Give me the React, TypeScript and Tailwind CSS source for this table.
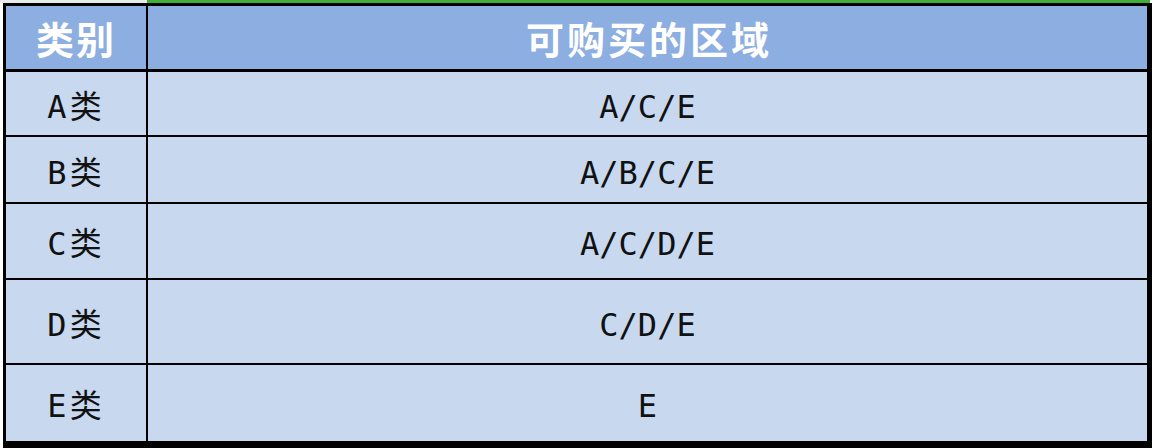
const rows = [
  { cat: "A类", zones: "A/C/E", h: "h-[65px]" },
  { cat: "B类", zones: "A/B/C/E", h: "h-[67px]" },
  { cat: "C类", zones: "A/C/D/E", h: "h-[76px]" },
  { cat: "D类", zones: "C/D/E", h: "h-[85px]" },
  { cat: "E类", zones: "E", h: "h-[76px]" },
];

const App = () => {
  return (
    <div className="w-[1156px] h-[448px] bg-white overflow-hidden flex flex-col">
      {/* green strip above the table */}
      <div className="flex h-[3px] shrink-0">
        <div className="w-[147px] bg-[#e8ebe8]" />
        <div className="w-[1003px] bg-[#3fae3a]" />
      </div>
      <div className="ml-[3px] w-[1149px] flex-1 border-l-[3px] border-t-[3px] border-r-[5px] border-b-[7px] border-black bg-[#c7d8ef] flex flex-col">
        {/* header */}
        <div className="flex h-[66px] shrink-0 border-b-[3px] border-black bg-[#8caee0] text-white font-bold text-[38px] leading-none [font-family:'Noto_Sans_CJK_SC',sans-serif]">
          <div className="w-[142px] border-r-[2px] border-black flex items-center justify-center tracking-[2px]">
            类别
          </div>
          <div className="flex-1 flex items-center justify-center tracking-[3px] pl-[3px]">
            可购买的区域
          </div>
        </div>
        {rows.map((r, i) => (
          <div
            key={r.cat}
            className={`flex shrink-0 ${r.h} ${i < rows.length - 1 ? "border-b-[2px] border-black" : ""} text-[#111] text-[32px] leading-none [font-family:'DejaVu_Sans_Mono','Noto_Sans_CJK_SC',monospace]`}
          >
            <div className="w-[142px] border-r-[2px] border-black flex items-center justify-center pt-[6px] tracking-[3px]">
              {r.cat}
            </div>
            <div className="flex-1 flex items-center justify-center pt-[6px]">
              {r.zones}
            </div>
          </div>
        ))}
      </div>
    </div>
  );
};

export default App;
